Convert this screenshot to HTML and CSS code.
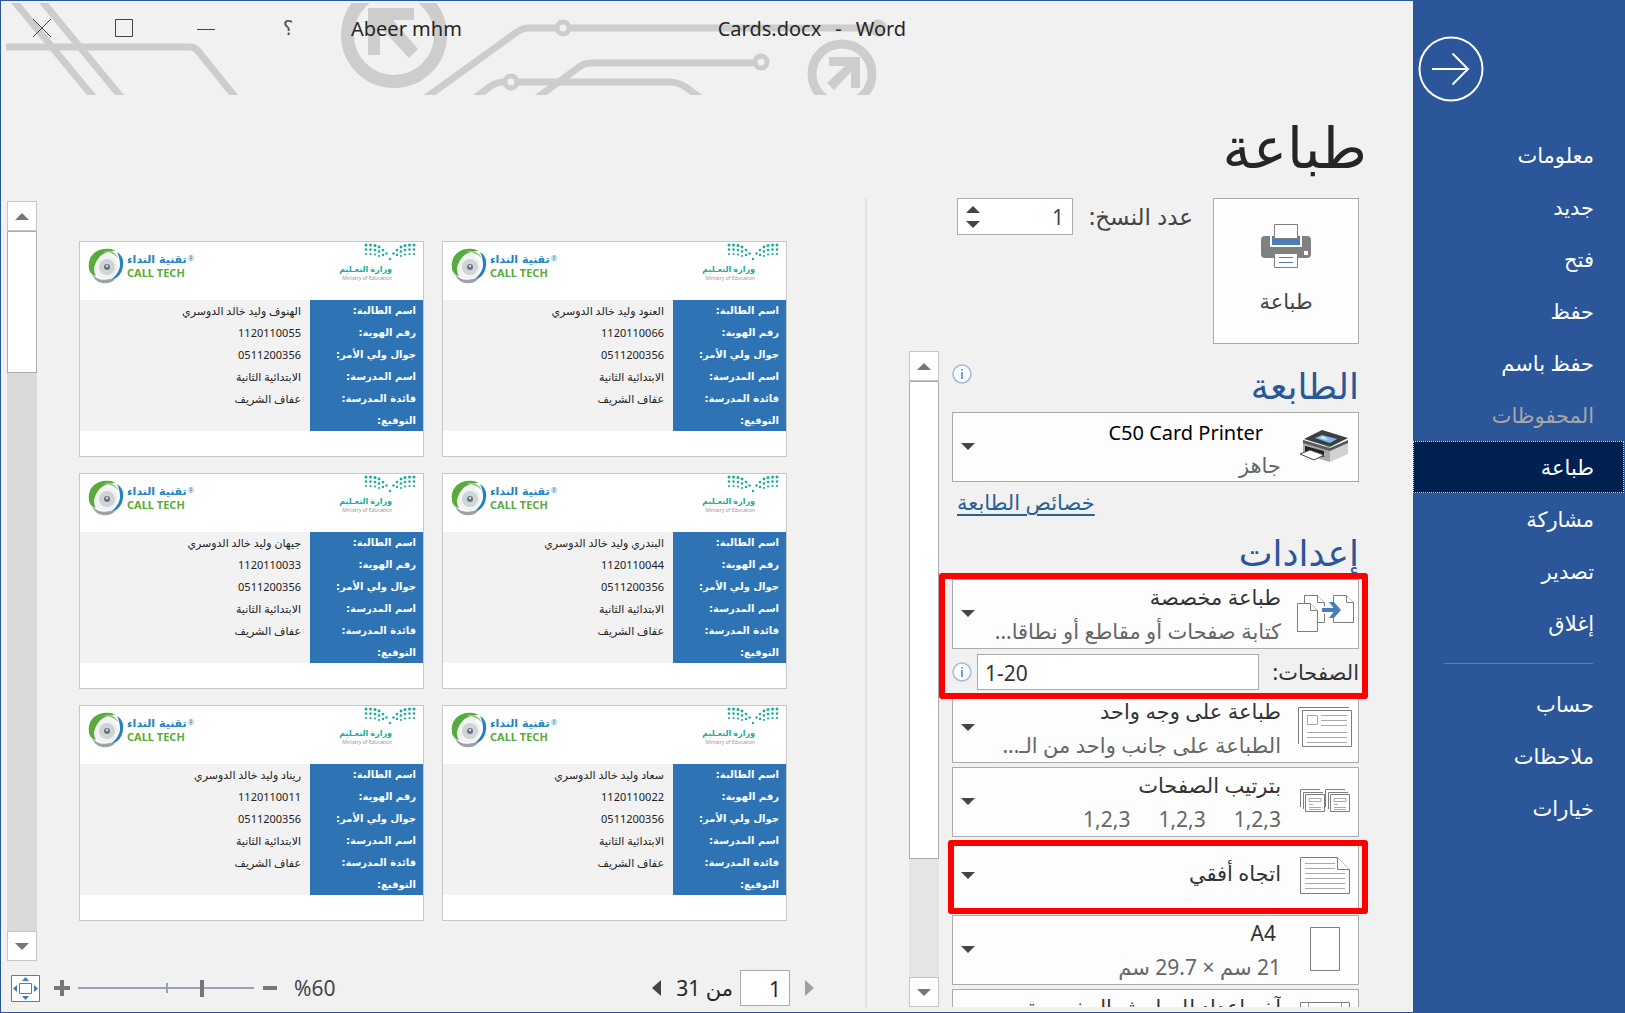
FILE: index.html
```html
<!DOCTYPE html>
<html lang="ar" dir="rtl">
<head>
<meta charset="utf-8">
<title>Cards.docx - Word</title>
<meta name="viewport" content="width=device-width, initial-scale=1">
<link rel="stylesheet" href="styles.css">
</head>
<body>
<svg class="defs" aria-hidden="true">
  <symbol id="calltech" viewBox="0 0 36 36">
    <circle cx="18" cy="19" r="12" fill="#f1f3f3"/>
    <circle cx="19" cy="19" r="8" fill="#cfd4d6"/>
    <path d="M1 20C-1 8 9-1 22 1c2 0 4 1 5 2C17 3 9 8 6 20c0 4 1 6 2 8C4 27 1 24 1 20z" fill="#58ab3c"/>
    <path d="M14 4c7-3 14 0 17 7-4-5-11-8-17-7z" fill="#8cc878"/>
    <path d="M29 4c5 3 7 8 6 14-1 8-6 13-13 14 5-3 9-8 10-14 0-6-1-10-3-14z" fill="#2183c2"/>
    <path d="M4 26c4 5 10 7 18 5l6-1c-4 5-9 6-14 5-5-1-9-5-10-9z" fill="#9ba3a6"/>
    <circle cx="19" cy="19" r="3" fill="#6d7680"/>
    <circle cx="19" cy="18" r="1" fill="#fff"/>
  </symbol>
  <symbol id="ministry" viewBox="0 0 52 20">
    <g id="wing" fill="#18ac9b">
      <circle cx="2" cy="2" r="1.5"/><circle cx="2" cy="6.500" r="1.300"/><circle cx="2" cy="11" r="1.100"/>
      <circle cx="6.500" cy="2" r="1.500"/><circle cx="6.500" cy="6.500" r="1.300"/><circle cx="6.500" cy="11" r="1.100"/>
      <circle cx="11" cy="2.500" r="1.500"/><circle cx="11" cy="7" r="1.300"/><circle cx="11" cy="11.500" r="1.100"/>
      <circle cx="15" cy="4" r="1.400"/><circle cx="15" cy="8.500" r="1.300"/><circle cx="15" cy="13" r="1"/>
      <circle cx="19" cy="7" r="1.300"/><circle cx="19" cy="12" r="1.200"/>
      <circle cx="22.500" cy="10.500" r="1.200"/>
    </g>
    <use href="#wing" transform="matrix(-1 0 0 1 52 0)"/>
    <circle cx="26" cy="16" r="1.200" fill="#18ac9b"/>
  </symbol>
  <symbol id="info" viewBox="0 0 20 20">
    <circle cx="10" cy="10" r="9" fill="#fafcff" stroke="#a3bbdf" stroke-width="1.500"/>
    <path d="M10 8v7M10 5v1.500" stroke="#4a7ebb" stroke-width="1.500"/>
  </symbol>
  <symbol id="up" viewBox="0 0 14 7"><path d="M7 0l7 7H0z" fill="currentColor"/></symbol>
  <symbol id="down" viewBox="0 0 14 7"><path d="M0 0h14L7 7z" fill="currentColor"/></symbol>
</svg>

<div class="window">
  <nav class="sidebar" aria-label="ملف">
    <button class="back" aria-label="رجوع">
      <svg viewBox="0 0 66 66"><circle cx="33" cy="33" r="31.500"/><path d="M14 33h36M34.500 17.500L50 33 34.500 48.500"/></svg>
    </button>
    <a href="#info">معلومات</a>
    <a href="#new">جديد</a>
    <a href="#open">فتح</a>
    <a href="#save">حفظ</a>
    <a href="#save-as">حفظ باسم</a>
    <a href="#history" class="off" aria-disabled="true">المحفوظات</a>
    <a href="#print" class="current" aria-current="page">طباعة</a>
    <a href="#share">مشاركة</a>
    <a href="#export">تصدير</a>
    <a href="#close">إغلاق</a>
    <hr>
    <a href="#account">حساب</a>
    <a href="#feedback">ملاحظات</a>
    <a href="#options">خيارات</a>
  </nav>

  <main class="main">
    <header class="titlebar" dir="ltr">
      <svg class="circuit" viewBox="0 0 900 92" aria-hidden="true">
        <g fill="none" stroke="#cdcdcd" stroke-width="7">
          <path d="M8-2L88 95M36-2L116 95"/>
          <path d="M0 44h184q5 0 8 4l38 47"/>
          <path d="M418 96L504 34q11-9 18-9h350"/>
          <path d="M465 98l17-13q8-6 16-6h165q10 0 18 6l16 12"/>
          <path d="M528 97l45-33q6-4 12-4h162"/>
        </g>
        <circle cx="388" cy="32" r="46.500" fill="none" stroke="#cdcdcd" stroke-width="13"/>
        <path d="M362 5h46v12h-21l25 29-9 9-29-31v28h-12z" fill="#cdcdcd"/>
        <circle cx="836" cy="71" r="30" fill="none" stroke="#cdcdcd" stroke-width="9"/>
        <path d="M823 54h31v31h-9V69l-17 18-7-7 18-17h-16z" fill="#cdcdcd"/>
        <g fill="#f1f1f1" stroke="#cdcdcd" stroke-width="5">
          <circle cx="557" cy="25" r="6"/><circle cx="505" cy="79" r="6"/><circle cx="755" cy="59" r="6"/><circle cx="872" cy="25" r="6" fill="#cdcdcd"/>
        </g>
      </svg>
      <button aria-label="إغلاق"><svg viewBox="0 0 20 20"><path d="M1 1l18 18M19 1L1 19"/></svg></button>
      <button aria-label="تكبير"><svg viewBox="0 0 20 20"><path d="M1.500 1.500h17v17h-17z"/></svg></button>
      <button aria-label="تصغير"><svg viewBox="0 0 20 20"><path d="M1 11.500h18"/></svg></button>
      <button class="help">؟</button>
      <span class="user">Abeer mhm</span>
      <span class="doc"><span>Cards.docx</span><span>-</span><span>Word</span></span>
    </header>

    <h1>طباعة</h1>

    <div class="body">
      <section class="print">
        <div class="top">
          <button class="print-btn">
            <svg viewBox="0 0 50 46" aria-hidden="true">
              <rect x="0" y="13" width="50" height="22" rx="4" fill="#808080"/>
              <path d="M9 12h32v12H9z" fill="#fff"/><path d="M11 13h28v9H11z" fill="#4a7ebb"/>
              <path d="M13.500 1.500h23v14h-23z" fill="#fff" stroke="#808080"/>
              <path d="M13.500 30.500h23v14h-23z" fill="#fff" stroke="#808080"/>
              <path d="M18 34.500h14M18 39.500h14" stroke="#4a7ebb"/>
              <rect x="43" y="28" width="4" height="4" fill="#fff"/>
            </svg>
            <span>طباعة</span>
          </button>
          <label class="copies-label" for="copies">عدد النسخ:</label>
          <div class="spinner">
            <input id="copies" type="number" value="1">
            <div class="steps"><svg class="tri"><use href="#up"/></svg><svg class="tri"><use href="#down"/></svg></div>
          </div>
        </div>

        <div class="scroller">
          <div class="options">
            <div class="head"><h2>الطابعة</h2><svg class="info"><use href="#info"/></svg></div>
            <div class="drop printer">
              <div class="icon"><svg width="50" height="32" viewBox="0 0 50 32" aria-hidden="true">
                <path d="M3 10l27 8v14L3 24z" fill="#a9a9a9"/><path d="M30 18l18-7v13l-18 8z" fill="#d2d2d2"/>
                <path d="M4 9L22 0l26 8-18 9z" fill="#3b4045"/><path d="M3 10l27 8 18-8v3l-18 8-27-8z" fill="#555b60"/>
                <path d="M15 8l7-3 15 4-7 4z" fill="#86b9e8"/><path d="M20 8l3-2 5 4z" fill="#dff0fc"/>
                <path d="M5 16l19 5v6L5 22z" fill="#222"/><path d="M0 24l10-4 14 5-10 5z" fill="#fff" stroke="#444"/>
                <circle cx="28" cy="17" r="1.500" fill="#36c336"/>
              </svg></div>
              <div class="text"><select aria-label="الطابعة" class="name"><option>C50 Card Printer</option></select><small>جاهز</small></div>
              <svg class="tri"><use href="#down"/></svg>
            </div>
            <a class="props" href="#props">خصائص الطابعة</a>
            <div class="head"><h2>إعدادات</h2></div>

            <div class="group marked">
              <div class="drop">
                <div class="icon"><svg width="58" height="38" viewBox="0 0 58 38" aria-hidden="true">
                  <g fill="#fff" stroke="#7d7d7d"><path d="M8.500 1.500h13l7 7v20h-20z"/><path d="M21.500 1.500v7h7"/>
                  <path d="M1.500 9.500h13l7 7v21h-20z"/><path d="M14.500 9.500v7h7"/>
                  <path d="M37.500 1.500h13l7 7v20h-20z"/><path d="M50.500 1.500v7h7"/></g>
                  <path d="M24 16h20" stroke="#fff" stroke-width="7"/>
                  <path d="M26 16h15" stroke="#4a7ebb" stroke-width="4"/><path d="M33 8h5l7 8-7 8h-5l6-8z" fill="#4a7ebb"/>
                </svg></div>
                <div class="text"><select aria-label="نطاق الطباعة"><option>طباعة مخصصة</option></select><small>كتابة صفحات أو مقاطع أو نطاقا...</small></div>
                <svg class="tri"><use href="#down"/></svg>
              </div>
              <div class="pages">
                <label for="pages">الصفحات:</label>
                <input id="pages" type="text" dir="ltr" value="1-20">
                <svg class="info"><use href="#info"/></svg>
              </div>
            </div>

            <div class="drop">
              <div class="icon"><svg width="54" height="40" viewBox="0 0 54 40" aria-hidden="true">
                <g fill="none" stroke="#7d7d7d"><path d="M.5 37V.5H51"/><path d="M4.500 3.500h49v36h-49z" fill="#fff"/></g>
                <path d="M9.500 8.500h10v9h-10zM23 8.500h26M23 13.500h26M23 18.500h26M9 25.500h40M9 30.500h40M9 35.500h40" fill="none" stroke="#aaa"/>
              </svg></div>
              <div class="text"><select aria-label="الوجه"><option>طباعة على وجه واحد</option></select><small>الطباعة على جانب واحد من الـ...</small></div>
              <svg class="tri"><use href="#down"/></svg>
            </div>

            <div class="drop">
              <div class="icon"><svg width="50" height="24" viewBox="0 0 50 24" aria-hidden="true">
                <g id="stack" fill="none" stroke="#7d7d7d"><path d="M.5 18V.5H20M3.500 20V3.500H23"/><path d="M5.500 5.500h19v17h-19z" fill="#fff"/><path d="M9 9.500h12v3H9zM9 15.500h4M9 18.500h12M9 20.500h12" stroke="#aaa"/></g>
                <use href="#stack" x="25"/>
              </svg></div>
              <div class="text"><select aria-label="الترتيب"><option>بترتيب الصفحات</option></select><small class="sets"><span>1,2,3</span><span>1,2,3</span><span>1,2,3</span></small></div>
              <svg class="tri"><use href="#down"/></svg>
            </div>

            <div class="drop marked single">
              <div class="icon"><svg width="50" height="38" viewBox="0 0 50 38" aria-hidden="true">
                <g fill="#fff" stroke="#7d7d7d"><path d="M.5 1.500h37l12 12v24H.5z"/><path d="M37.500 1.500v12h12"/></g>
                <path d="M5 7.500h30M5 12.500h30M5 17.500h40M5 22.500h40M5 27.500h40M5 32.500h40" stroke="#aaa"/>
              </svg></div>
              <div class="text"><select aria-label="الاتجاه"><option>اتجاه أفقي</option></select></div>
              <svg class="tri"><use href="#down"/></svg>
            </div>

            <div class="drop paper">
              <div class="icon"><svg width="30" height="44" viewBox="0 0 30 44" aria-hidden="true"><path d="M.5.5h29v43H.5z" fill="#fff" stroke="#7d7d7d"/></svg></div>
              <div class="text"><select aria-label="حجم الورق"><option>A4</option></select><small>21 سم × 29.7 سم</small></div>
              <svg class="tri"><use href="#down"/></svg>
            </div>

            <div class="drop">
              <div class="icon"><svg width="50" height="42" viewBox="0 0 50 42" aria-hidden="true"><path d="M.5.5h49v41H.5z" fill="#fff" stroke="#7d7d7d"/><path d="M8.500 1v40M41.500 1v40M1 6.500h48" stroke="#7ba5d6"/></svg></div>
              <div class="text"><select aria-label="الهوامش"><option>آخر إعداد للهوامش المخصصة</option></select></div>
              <svg class="tri"><use href="#down"/></svg>
            </div>
          </div>
          <div class="bar">
            <button aria-label="أعلى"><svg class="tri"><use href="#up"/></svg></button>
            <div class="thumb tall"></div>
            <button aria-label="أسفل"><svg class="tri"><use href="#down"/></svg></button>
          </div>
        </div>
      </section>

      <section class="preview" aria-label="معاينة">
        <div class="view">
          <div class="cards">
            <article class="card">
              <div class="logos"><div class="moe"><svg><use href="#ministry"/></svg><b>وزارة التعـليم</b><span>Ministry of Education</span></div><div class="call"><svg><use href="#calltech"/></svg><div><b>تقنية النداء</b><strong>CALL TECH</strong></div><i>®</i></div></div>
              <table><tr><th>اسم الطالبة:</th><td>العنود وليد خالد الدوسري</td></tr><tr><th>رقم الهوية:</th><td>1120110066</td></tr><tr><th>جوال ولي الأمر:</th><td>0511200356</td></tr><tr><th>اسم المدرسة:</th><td>الابتدائية الثانية</td></tr><tr><th>قائدة المدرسة:</th><td>عفاف الشريف</td></tr><tr><th>التوقيع:</th><td></td></tr></table>
            </article>
            <article class="card">
              <div class="logos"><div class="moe"><svg><use href="#ministry"/></svg><b>وزارة التعـليم</b><span>Ministry of Education</span></div><div class="call"><svg><use href="#calltech"/></svg><div><b>تقنية النداء</b><strong>CALL TECH</strong></div><i>®</i></div></div>
              <table><tr><th>اسم الطالبة:</th><td>الهنوف وليد خالد الدوسري</td></tr><tr><th>رقم الهوية:</th><td>1120110055</td></tr><tr><th>جوال ولي الأمر:</th><td>0511200356</td></tr><tr><th>اسم المدرسة:</th><td>الابتدائية الثانية</td></tr><tr><th>قائدة المدرسة:</th><td>عفاف الشريف</td></tr><tr><th>التوقيع:</th><td></td></tr></table>
            </article>
            <article class="card">
              <div class="logos"><div class="moe"><svg><use href="#ministry"/></svg><b>وزارة التعـليم</b><span>Ministry of Education</span></div><div class="call"><svg><use href="#calltech"/></svg><div><b>تقنية النداء</b><strong>CALL TECH</strong></div><i>®</i></div></div>
              <table><tr><th>اسم الطالبة:</th><td>البندري وليد خالد الدوسري</td></tr><tr><th>رقم الهوية:</th><td>1120110044</td></tr><tr><th>جوال ولي الأمر:</th><td>0511200356</td></tr><tr><th>اسم المدرسة:</th><td>الابتدائية الثانية</td></tr><tr><th>قائدة المدرسة:</th><td>عفاف الشريف</td></tr><tr><th>التوقيع:</th><td></td></tr></table>
            </article>
            <article class="card">
              <div class="logos"><div class="moe"><svg><use href="#ministry"/></svg><b>وزارة التعـليم</b><span>Ministry of Education</span></div><div class="call"><svg><use href="#calltech"/></svg><div><b>تقنية النداء</b><strong>CALL TECH</strong></div><i>®</i></div></div>
              <table><tr><th>اسم الطالبة:</th><td>جيهان وليد خالد الدوسري</td></tr><tr><th>رقم الهوية:</th><td>1120110033</td></tr><tr><th>جوال ولي الأمر:</th><td>0511200356</td></tr><tr><th>اسم المدرسة:</th><td>الابتدائية الثانية</td></tr><tr><th>قائدة المدرسة:</th><td>عفاف الشريف</td></tr><tr><th>التوقيع:</th><td></td></tr></table>
            </article>
            <article class="card">
              <div class="logos"><div class="moe"><svg><use href="#ministry"/></svg><b>وزارة التعـليم</b><span>Ministry of Education</span></div><div class="call"><svg><use href="#calltech"/></svg><div><b>تقنية النداء</b><strong>CALL TECH</strong></div><i>®</i></div></div>
              <table><tr><th>اسم الطالبة:</th><td>سعاد وليد خالد الدوسري</td></tr><tr><th>رقم الهوية:</th><td>1120110022</td></tr><tr><th>جوال ولي الأمر:</th><td>0511200356</td></tr><tr><th>اسم المدرسة:</th><td>الابتدائية الثانية</td></tr><tr><th>قائدة المدرسة:</th><td>عفاف الشريف</td></tr><tr><th>التوقيع:</th><td></td></tr></table>
            </article>
            <article class="card">
              <div class="logos"><div class="moe"><svg><use href="#ministry"/></svg><b>وزارة التعـليم</b><span>Ministry of Education</span></div><div class="call"><svg><use href="#calltech"/></svg><div><b>تقنية النداء</b><strong>CALL TECH</strong></div><i>®</i></div></div>
              <table><tr><th>اسم الطالبة:</th><td>ريناد وليد خالد الدوسري</td></tr><tr><th>رقم الهوية:</th><td>1120110011</td></tr><tr><th>جوال ولي الأمر:</th><td>0511200356</td></tr><tr><th>اسم المدرسة:</th><td>الابتدائية الثانية</td></tr><tr><th>قائدة المدرسة:</th><td>عفاف الشريف</td></tr><tr><th>التوقيع:</th><td></td></tr></table>
            </article>
          </div>
          <div class="bar wide">
            <button aria-label="أعلى"><svg class="tri"><use href="#up"/></svg></button>
            <div class="thumb short"></div>
            <button aria-label="أسفل"><svg class="tri"><use href="#down"/></svg></button>
          </div>
        </div>

        <footer class="status">
          <div class="pager">
            <button aria-label="الصفحة السابقة" disabled><svg width="9" height="16" viewBox="0 0 9 16"><path d="M0 0l9 8-9 8z" fill="#a0a0a0"/></svg></button>
            <input type="text" value="1" aria-label="الصفحة">
            <span>من 31</span>
            <button aria-label="الصفحة التالية"><svg width="9" height="16" viewBox="0 0 9 16"><path d="M9 0v16L0 8z" fill="#444"/></svg></button>
          </div>
          <div class="zoom">
            <span dir="ltr">%60</span>
            <button aria-label="تصغير العرض"><svg width="16" height="16" viewBox="0 0 16 16"><path d="M1 8h14" stroke="#777" stroke-width="4"/></svg></button>
            <input type="range" min="0" max="100" value="29" aria-label="تكبير/تصغير">
            <button aria-label="تكبير العرض"><svg width="16" height="16" viewBox="0 0 16 16"><path d="M0 8h16M8 0v16" stroke="#777" stroke-width="4"/></svg></button>
            <button class="fit" aria-label="ملاءمة الصفحة"><svg width="29" height="27" viewBox="0 0 29 27"><path d="M.5.5h28v26H.5z" fill="#fff" stroke="#777"/><path d="M8.500 8.500h12v10h-12z" fill="#fff" stroke="#777" stroke-width="1"/><path d="M11 6l3.500-4L18 6zM11 21l3.500 4 3.500-4zM6 10l-4 3.500L6 17zM23 10l4 3.500-4 3.500z" fill="#3c7cc0"/></svg></button>
          </div>
        </footer>
      </section>
    </div>
  </main>
</div>
</body>
</html>
```
FILE: styles.css
```css
* { box-sizing: border-box; }
body {
  margin: 0;
  font-family: "Noto Sans", "DejaVu Sans", sans-serif;
  font-size: 21px;
  line-height: 32px;
  color: #262626;
  background: #f1f1f1;
}
button, input, select { font: inherit; color: inherit; margin: 0; }
button { border: 0; padding: 0; background: none; cursor: pointer; }
svg { display: block; flex: none; }
.defs { position: absolute; width: 0; height: 0; }

.window {
  display: flex;
  height: 100vh;
  border: 1px solid #2b579a;
  overflow: hidden;
}

/* Sidebar */
.sidebar {
  flex: none;
  width: 211px;
  background: #2b579a;
  color: #fff;
}
.back { display: block; margin: 35px 140px 27px 5px; width: 66px; }
.back svg { width: 66px; height: 66px; fill: none; stroke: #fff; stroke-width: 2; }
.sidebar a {
  display: flex;
  align-items: center;
  height: 52px;
  padding-right: 30px;
  color: #fff;
  text-decoration: none;
}
.sidebar a.off { color: #a6a6a6; }
.sidebar a.current { background: #002050; outline: 1px dotted #ddd; outline-offset: -1px; }
.sidebar hr { margin: 14px 31px; border: 0; border-top: 1px solid #5a7fb8; }

/* Title bar */
.main { flex: 1; min-width: 0; display: flex; flex-direction: column; }
.titlebar { position: relative; flex: none; display: flex; height: 94px; font-size: 20px; }
.circuit { position: absolute; left: 5px; top: 2px; width: 900px; height: 92px; }
.titlebar button {
  position: relative;
  display: flex;
  justify-content: center;
  width: 82px;
  height: 54px;
  align-items: center;
}
.titlebar button svg { width: 20px; height: 20px; fill: none; stroke: #444; stroke-width: 1; }
.titlebar .help { color: #555; }
.user { position: relative; margin-left: 22px; line-height: 56px; }
.doc {
  position: relative;
  flex: 1;
  display: flex;
  justify-content: center;
  gap: 14px;
  margin-right: 251px;
  line-height: 56px;
}
h1 { flex: none; margin: 0; height: 103px; padding-right: 46px; font-size: 57px; font-weight: 400; line-height: 103px; }

.body { flex: 1; min-height: 0; display: flex; padding-bottom: 5px; }

/* Print panel */
.print {
  flex: none;
  width: 548px;
  display: flex;
  flex-direction: column;
  padding: 0 54px 0 42px;
  border-left: 2px solid #e1e1e1;
}
.top { flex: none; display: flex; align-items: flex-start; padding-bottom: 7px; color: #444; }
.print-btn {
  display: flex;
  flex-direction: column;
  align-items: center;
  justify-content: center;
  gap: 16px;
  width: 146px;
  height: 146px;
  padding-bottom: 2px;
  background: #fdfdfd;
  border: 1px solid #ababab;
}
.print-btn svg { width: 50px; height: 46px; }
.copies-label { margin: 0 20px 0 16px; font-size: 23px; line-height: 37px; }
.spinner {
  display: flex;
  align-items: center;
  width: 116px;
  height: 37px;
  padding: 0 8px;
  background: #fff;
  border: 1px solid #ababab;
}
.spinner input {
  flex: 1;
  min-width: 0;
  padding: 0;
  border: 0;
  background: none;
  text-align: right;
  appearance: textfield;
}
.spinner input::-webkit-inner-spin-button { display: none; }
.steps { display: flex; flex-direction: column; gap: 8px; }
.tri { width: 14px; height: 7px; color: #444; }

.scroller { flex: 1; min-height: 0; display: flex; margin-right: -9px; overflow: hidden; }
.options { flex: 1; min-width: 0; padding: 0 9px 0 13px; }
.head { display: flex; justify-content: space-between; height: 61px; }
.head h2 { margin: 0; font-size: 36px; font-weight: 400; line-height: 70px; color: #2b579a; }
.head .info { margin-top: 13px; }
.info { width: 20px; height: 20px; }
.drop {
  position: relative;
  display: flex;
  height: 70px;
  margin-bottom: 4px;
  padding-left: 8px;
  background: #fdfdfd;
  border: 1px solid #ababab;
}
.drop .icon { flex: none; display: grid; place-items: center; width: 66px; margin-left: 11px; padding-bottom: 2px; }
.drop .text { flex: 1; min-width: 0; display: flex; flex-direction: column; }
.drop > .tri { align-self: center; margin-bottom: 2px; }
.drop select {
  width: 100%;
  height: 34px;
  padding: 0;
  border: 0;
  appearance: none;
  background: none;
  color: #333;
}
.drop small { font-size: 21px; line-height: 34px; color: #666; white-space: nowrap; }
.drop .name { height: 36px; padding: 4px 18px 0 0; font-size: 20px; color: #000; }
.drop .name + small { line-height: 32px; }
.paper select { padding-right: 5px; }
.sets { display: flex; gap: 28px; }
.single select { height: 62px; }
.printer { margin: 0; }
.props { display: block; width: fit-content; margin: 4px auto 0 5px; color: #2a6099; text-underline-offset: 4px; }

.group { position: relative; }
.group .drop { margin: 0; }
.marked::after {
  content: "";
  position: absolute;
  z-index: 1;
  border: 6px solid #f00;
  border-radius: 3px;
  pointer-events: none;
}
.group.marked::after { inset: -6px -9px -6px -13px; }
.drop.marked::after { inset: -2px -10px -4px -5px; }
.pages { display: flex; align-items: center; height: 44px; padding-top: 2px; color: #333; }
.pages input {
  flex: 1;
  min-width: 0;
  height: 36px;
  margin: 0 14px 0 5px;
  padding: 2px 7px 0;
  background: #fff;
  border: 1px solid #ababab;
}

/* Scroll bars */
.bar { flex: none; display: flex; flex-direction: column; width: 30px; background: #e5e5e5; }
.bar.wide { background: #dadada; }
.bar button { display: grid; place-items: center; height: 30px; background: #fff; border: 1px solid #c6c6c6; }
.bar .tri { color: #777; }
.thumb { background: #fff; border: 1px solid #ababab; margin-bottom: auto; }
.thumb.tall { height: 80%; max-height: 478px; }
.thumb.short { height: 142px; }

/* Preview */
.preview { flex: 1; min-width: 0; display: flex; flex-direction: column; }
.view { flex: 1; min-height: 0; display: flex; padding: 3px 0 0 6px; }
.cards {
  flex: 1;
  display: grid;
  grid-template-columns: 1fr 1fr;
  gap: 16px 18px;
  align-content: start;
  padding: 40px 78px 0 42px;
}
.card { height: 216px; background: #fff; border: 1px solid #c8c8c8; }
.logos { display: flex; justify-content: space-between; height: 58px; padding: 0 7px 0 8px; }
.moe { display: flex; flex-direction: column; align-items: flex-start; width: 77px; }
.moe svg { width: 52px; height: 20px; margin-top: 1px; }
.moe b { margin-right: 24px; font-size: 8px; line-height: 12px; color: #18ac9b; white-space: nowrap; }
.moe span { margin-right: 24px; font-size: 5px; line-height: 6px; color: #999; white-space: nowrap; }
.call { display: flex; direction: ltr; align-items: flex-start; padding-top: 6px; gap: 2px; }
.call svg { width: 36px; height: 36px; }
.call div { display: flex; flex-direction: column; width: 60px; padding: 5px 0 0 1px; white-space: nowrap; }
.call b { font: bold 11px/14px "DejaVu Sans", sans-serif; color: #2183c2; }
.call strong { font: bold 11px/12px "Noto Sans", sans-serif; color: #58ab3c; }
.call i { font: 7px/22px "Noto Sans", sans-serif; color: #2183c2; }
.card table { width: 100%; height: 131px; border-collapse: collapse; line-height: 20px; }
.card th, .card td { padding: 1px 7px 0 0; text-align: right; white-space: nowrap; }
.card th { width: 113px; background: #2e74b5; color: #fff; font: bold 10px/20px "DejaVu Sans", sans-serif; }
.card td { padding-right: 9px; background: #f2f2f2; color: #222; font-size: 11px; }

/* Status bar */
.status { flex: none; display: flex; align-items: center; justify-content: space-between; height: 46px; padding: 8px 51px 0 10px; }
.pager, .zoom { display: flex; align-items: center; }
.pager { gap: 15px; }
.pager input { width: 50px; height: 36px; padding: 2px 8px 0; background: #fff; border: 1px solid #ababab; }
.pager span { margin-right: -8px; }
.zoom { gap: 8px; color: #444; }
.zoom span { margin-left: 8px; }
.zoom .fit { margin-right: 6px; }
.zoom input {
  width: 176px;
  height: 18px;
  appearance: none;
  background:
    linear-gradient(#98a3b3, #98a3b3) 88px 4px / 2px 10px no-repeat,
    linear-gradient(#98a3b3, #98a3b3) 0 8px / 100% 2px no-repeat;
}
.zoom input::-webkit-slider-thumb { appearance: none; width: 4px; height: 17px; background: #777; }
```
